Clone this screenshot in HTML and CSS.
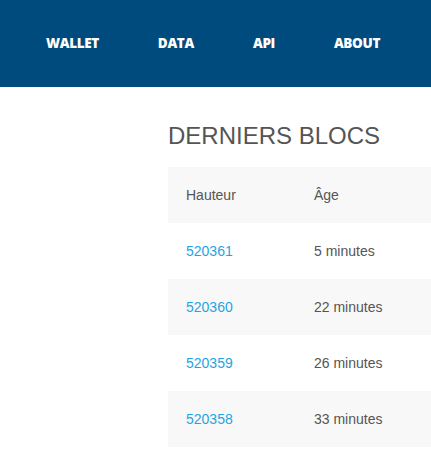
FILE: index.html
```html
<!DOCTYPE html>
<html lang="fr">
<head>
    <meta charset="UTF-8">
    <meta name="viewport" content="width=device-width, initial-scale=1.0">
    <title>Derniers blocs</title>
    <link rel="stylesheet" href="styles.css">
</head>
<body>

    <div class="navbar">
        <ul class="nav-links">
            <li><a href="#" class="nav-link">Wallet</a></li>
            <li><a href="#" class="nav-link">Data</a></li>
            <li><a href="#" class="nav-link">API</a></li>
            <li><a href="#" class="nav-link">About</a></li>
        </ul>
    </div>

    <main>
        <h1>Derniers blocs</h1>

        <table class="blocks">
            <thead>
                <tr>
                    <th class="col-height">Hauteur</th>
                    <th>Âge</th>
                </tr>
            </thead>
            <tbody>
                <tr>
                    <td><a href="#">520361</a></td>
                    <td>5 minutes</td>
                </tr>
                <tr>
                    <td><a href="#">520360</a></td>
                    <td>22 minutes</td>
                </tr>
                <tr>
                    <td><a href="#">520359</a></td>
                    <td>26 minutes</td>
                </tr>
                <tr>
                    <td><a href="#">520358</a></td>
                    <td>33 minutes</td>
                </tr>
            </tbody>
        </table>
    </main>

</body>
</html>
```

FILE: styles.css
```css
*{
    padding: 0;
    margin: 0;
    box-sizing: border-box;
}

body {
    font-family: "Liberation Sans", Arial, sans-serif;
    background-color: #fff;
    color: #555;
}

.navbar {
    background-color: #004b7d;
    height: 87px;
    display: flex;
    align-items: center;
    padding-left: 46px;
    padding-bottom: 1px;
}

.nav-links {
    list-style-type: none;
    display: flex;
    gap: 59px;
}

.nav-link {
    color: #fff;
    text-decoration: none;
    text-transform: uppercase;
    font-family: "Open Sans", sans-serif;
    font-weight: 800;
    font-size: 13.5px;
    letter-spacing: -0.35px;
}

main {
    padding-left: 168px;
}

h1 {
    font-weight: normal;
    font-size: 24px;
    text-transform: uppercase;
    color: #555;
    margin-top: 35px;
    margin-bottom: 17px;
    line-height: 28px;
}

.blocks {
    width: 263px;
    border-collapse: collapse;
    font-size: 14px;
}

.blocks th,
.blocks td {
    text-align: left;
    font-weight: normal;
    height: 56px;
    padding: 0 18px;
    color: #555;
    white-space: nowrap;
}

.blocks .col-height {
    width: 128px;
}

.blocks thead tr,
.blocks tbody tr:nth-child(even) {
    background-color: #f8f8f8;
}

.blocks a {
    color: #1ea5e4;
    text-decoration: none;
}
```
